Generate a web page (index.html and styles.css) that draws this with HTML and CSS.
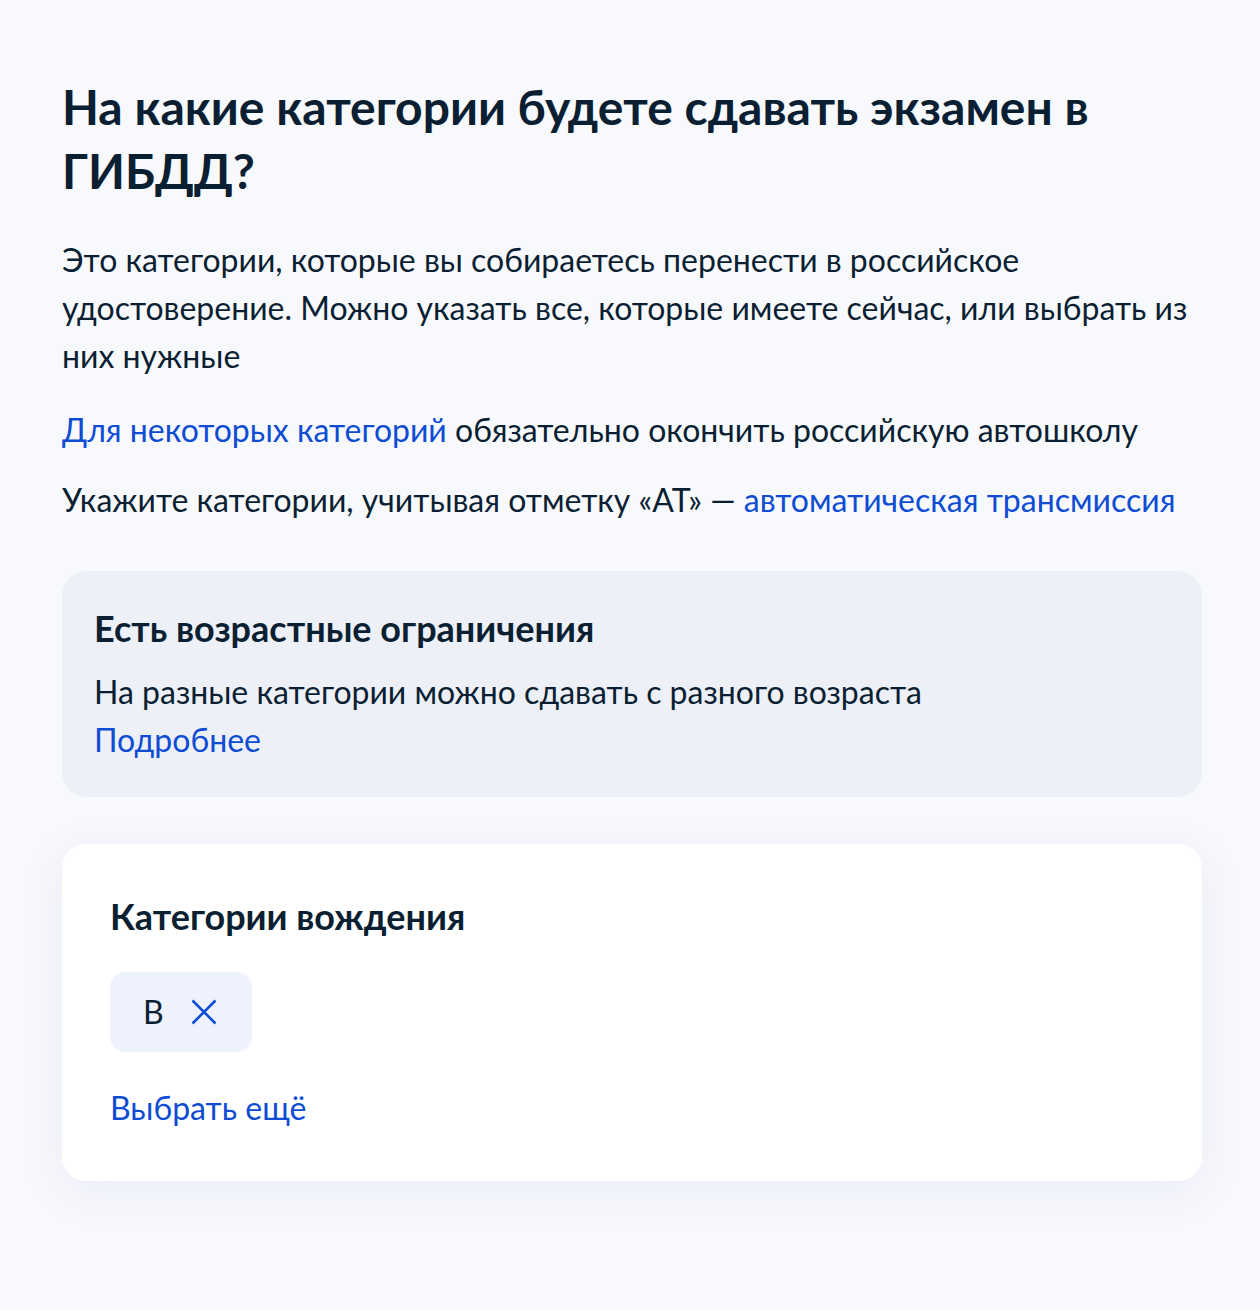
FILE: index.html
```html
<!DOCTYPE html>
<html lang="ru">
<head>
<meta charset="utf-8">
<title>Категории</title>
<link rel="stylesheet" href="styles.css">
</head>
<body>
<main class="page">
  <h1 class="title">На какие категории будете сдавать экзамен в ГИБДД?</h1>
  <p class="text text-first">Это категории, которые вы собираетесь перенести в российское удостоверение. Можно указать все, которые имеете сейчас, или выбрать из них нужные</p>
  <p class="text text-second"><a class="link" href="#">Для некоторых категорий</a> обязательно окончить российскую автошколу</p>
  <p class="text text-third">Укажите категории, учитывая отметку «АТ» — <a class="link" href="#">автоматическая трансмиссия</a></p>

  <section class="notice">
    <h2 class="notice-title">Есть возрастные ограничения</h2>
    <p class="notice-text">На разные категории можно сдавать с разного возраста<br><a class="link" href="#">Подробнее</a></p>
  </section>

  <section class="card">
    <h2 class="card-title">Категории вождения</h2>
    <div class="chips">
      <span class="chip">
        <span class="chip-label">B</span>
        <span class="chip-remove" aria-label="Удалить">
          <svg width="32" height="32" viewBox="0 0 32 32" fill="none">
            <path d="M4.5 4.5 L27.5 27.5 M27.5 4.5 L4.5 27.5" stroke="#0d4cd3" stroke-width="2.6" stroke-linecap="butt"/>
          </svg>
        </span>
      </span>
    </div>
    <a class="link more" href="#">Выбрать ещё</a>
  </section>
</main>
</body>
</html>
```
FILE: styles.css
```css
* { box-sizing: border-box; }
html, body {
  margin: 0;
  padding: 0;
  background: #f8f9fd;
}
body {
  font-family: Lato, "Noto Sans", sans-serif;
  color: #0b1f33;
  min-height: 1310px;
}
.page {
  padding: 75px 58px 120px 62px;
  display: flex;
  flex-direction: column;
}
.title {
  margin: 0 0 33px;
  font-size: 48px;
  line-height: 64px;
  font-weight: 700;
}
.text {
  margin: 0;
  font-size: 32px;
  line-height: 48px;
}
.text-first { margin-bottom: 26px; }
.text-second { margin-bottom: 22px; }
.text-third { margin-bottom: 47px; }
.link {
  color: #0d4cd3;
  text-decoration: none;
}
.notice {
  background: #edf0f7;
  border-radius: 24px;
  padding: 33px 32px 33px;
  margin-bottom: 47px;
}
.notice-title {
  margin: 0 0 16px;
  font-size: 36px;
  line-height: 48px;
  font-weight: 700;
}
.notice-text {
  margin: 0;
  font-size: 32px;
  line-height: 48px;
}
.card {
  background: #ffffff;
  border-radius: 24px;
  padding: 48px 48px 49px;
  box-shadow: 0 10px 48px rgba(40, 70, 150, 0.07);
  display: flex;
  flex-direction: column;
  align-items: flex-start;
}
.card-title {
  margin: 0 0 32px;
  font-size: 36px;
  line-height: 48px;
  font-weight: 700;
}
.chips {
  display: flex;
  gap: 16px;
  margin-bottom: 32px;
}
.chip {
  display: inline-flex;
  align-items: center;
  gap: 24px;
  height: 80px;
  padding: 0 32px 0 33px;
  background: #edf2fd;
  border-radius: 16px;
  font-size: 32px;
  line-height: 48px;
}
.chip-remove {
  display: flex;
  width: 32px;
  height: 32px;
}
.more {
  font-size: 32px;
  line-height: 48px;
}
```
